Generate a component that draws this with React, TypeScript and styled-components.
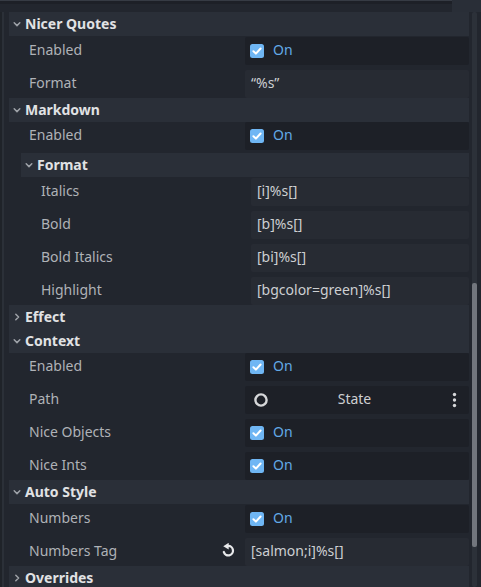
import React from "react";
import styled, { createGlobalStyle } from "styled-components";

const GlobalStyle = createGlobalStyle`
  html, body { margin: 0; padding: 0; background: #22262e; }
  body { font-family: "Noto Sans", "Open Sans", sans-serif; font-size: 14px; }
  * { box-sizing: border-box; }
`;

const Panel = styled.div`
  width: 481px;
  height: 587px;
  display: flex;
  overflow: hidden;
  background: #22262e;
`;

const Gutter = styled.div`
  flex: 0 0 9px;
  display: flex;
  flex-direction: column;
`;

const GutterTop = styled.div`
  flex: 0 0 12px;
  border-top: 1px solid #363b44;
  background: linear-gradient(to bottom, #1d2027 0 3px, #22262e 3px);
`;

const GutterRail = styled.div`
  flex: 1;
  background: linear-gradient(to right, #1f2329 0 2px, #2b3038 2px 4px, #22262e 4px);
`;

const MainColumn = styled.div`
  flex: 1;
  display: flex;
  flex-direction: column;
  min-width: 0;
`;

const TopStrip = styled.div`
  flex: 0 0 12px;
  display: flex;
`;

const StubLeft = styled.div`
  flex: 1;
  border-top: 1px solid #363b44;
  background: linear-gradient(to bottom, #1d2027 0 3px, #22262e 3px);
`;

const StubRight = styled.div`
  flex: 0 0 29px;
  background: #292e37;
`;

const Body = styled.div`
  flex: 1;
  display: flex;
  min-height: 0;
`;

const Content = styled.div`
  flex: 0 0 460px;
  display: flex;
  flex-direction: column;
  overflow: hidden;
`;

const ScrollArea = styled.div`
  flex: 1;
  padding: 0 4px 0 3px;
  display: flex;
`;

const Track = styled.div`
  width: 5px;
  height: 100%;
  background: #2c3139;
  border-radius: 2px;
  display: flex;
  flex-direction: column;
`;

const Thumb = styled.div<{ $offset: number; $size: number }>`
  margin-top: ${(p) => p.$offset}px;
  height: ${(p) => p.$size}px;
  background: #72767d;
  border-radius: 2px;
`;

const Header = styled.div<{ $nested?: boolean }>`
  flex: 0 0 24px;
  height: 24px;
  display: flex;
  align-items: center;
  gap: 4px;
  margin-left: ${(p) => (p.$nested ? 12 : 0)}px;
  padding-left: 4px;
  background: #2a2f38;
  color: #e1e2e4;
  font-weight: 700;
  font-size: 14px;
  line-height: 1;
`;

const SectionBody = styled.div`
  display: flex;
  flex-direction: column;
  gap: 5px;
  padding-top: 0.5px;
`;

const SubSection = styled.div`
  display: flex;
  flex-direction: column;
  margin-top: -2px;
`;

const Row = styled.div`
  display: flex;
  height: 28px;
  line-height: 1;
`;

const Label = styled.div<{ $nested?: boolean }>`
  flex: 0 0 ${(p) => (p.$nested ? 242 : 236)}px;
  padding-left: ${(p) => (p.$nested ? 32 : 20)}px;
  padding-right: 9px;
  padding-bottom: 2px;
  display: flex;
  align-items: center;
  justify-content: space-between;
  color: #afb2b7;
  font-size: 14px;
  white-space: nowrap;
`;

const Field = styled.div<{ $variant: "check" | "text" | "path" }>`
  flex: 1;
  display: flex;
  align-items: center;
  border-radius: 2px;
  background: ${(p) => (p.$variant === "text" ? "#272b33" : "#1d2027")};
  padding-left: ${(p) => (p.$variant === "check" ? 5 : p.$variant === "path" ? 8 : 6)}px;
  gap: ${(p) => (p.$variant === "check" ? 9 : 0)}px;
  color: #cdcfd2;
  font-size: 14px;
  white-space: nowrap;
  overflow: hidden;
`;

const FieldText = styled.span`
  padding-bottom: 2px;
`;

const OnText = styled.span`
  color: #62a9e6;
  padding-bottom: 2px;
`;

const PathName = styled.span`
  flex: 1;
  text-align: center;
  color: #cdcfd2;
  padding-bottom: 2px;
`;

const Kebab = styled.div`
  flex: 0 0 29px;
  display: flex;
  justify-content: center;
  align-items: center;
`;

const Chevron = ({ open }: { open: boolean }) => (
  <svg width="8" height="8" viewBox="0 0 8 8">
    {open ? (
      <path d="M1.2 2.8 L4 5.6 L6.8 2.8" fill="none" stroke="#9ea2a8" strokeWidth="1.5" strokeLinecap="round" strokeLinejoin="round" />
    ) : (
      <path d="M2.8 1.2 L5.6 4 L2.8 6.8" fill="none" stroke="#9ea2a8" strokeWidth="1.5" strokeLinecap="round" strokeLinejoin="round" />
    )}
  </svg>
);

const CheckIcon = () => (
  <svg width="14" height="14" viewBox="0 0 14 14">
    <rect x="0" y="0" width="14" height="14" rx="2.5" fill="#6fb6f4" />
    <path d="M3.4 7.3 L5.9 9.6 L10.6 4.5" fill="none" stroke="#ffffff" strokeWidth="2" strokeLinecap="round" strokeLinejoin="round" />
  </svg>
);

const RingIcon = () => (
  <svg width="16" height="16" viewBox="0 0 16 16">
    <circle cx="8" cy="8" r="5.6" fill="none" stroke="#d6d7d9" strokeWidth="2.4" />
  </svg>
);

const KebabIcon = () => (
  <svg width="5" height="16" viewBox="0 0 5 16">
    <circle cx="2.5" cy="2.5" r="1.7" fill="#d6d7d9" />
    <circle cx="2.5" cy="8" r="1.7" fill="#d6d7d9" />
    <circle cx="2.5" cy="13.5" r="1.7" fill="#d6d7d9" />
  </svg>
);

const RevertIcon = () => (
  <svg width="15" height="15" viewBox="0 0 16 16">
    <path d="M7.6 3.2 A5 5 0 1 1 3 9.6" fill="none" stroke="#e8e9eb" strokeWidth="2.4" strokeLinecap="round" />
    <path d="M2.4 3.4 L8.2 -0.2 L8.2 7 Z" fill="#e8e9eb" />
  </svg>
);

type FieldProps = { label: string; nested?: boolean; revert?: boolean };

const CheckRow = ({ label, nested }: FieldProps) => (
  <Row>
    <Label $nested={nested}>{label}</Label>
    <Field $variant="check">
      <CheckIcon />
      <OnText>On</OnText>
    </Field>
  </Row>
);

const TextRow = ({ label, nested, revert, value }: FieldProps & { value: string }) => (
  <Row>
    <Label $nested={nested}>
      <span>{label}</span>
      {revert && <RevertIcon />}
    </Label>
    <Field $variant="text">
      <FieldText>{value}</FieldText>
    </Field>
  </Row>
);

const PathRow = ({ label }: FieldProps) => (
  <Row>
    <Label>{label}</Label>
    <Field $variant="path">
      <RingIcon />
      <PathName>State</PathName>
      <Kebab>
        <KebabIcon />
      </Kebab>
    </Field>
  </Row>
);

const SectionHeader = ({ title, open, nested }: { title: string; open: boolean; nested?: boolean }) => (
  <Header $nested={nested}>
    <Chevron open={open} />
    <span>{title}</span>
  </Header>
);

export default function App() {
  return (
    <>
      <GlobalStyle />
      <Panel>
        <Gutter>
          <GutterTop />
          <GutterRail />
        </Gutter>
        <MainColumn>
          <TopStrip>
            <StubLeft />
            <StubRight />
          </TopStrip>
          <Body>
            <Content>
              <SectionHeader title="Nicer Quotes" open />
              <SectionBody>
                <CheckRow label="Enabled" />
                <TextRow label="Format" value={"\u201C%s\u201D"} />
              </SectionBody>

              <SectionHeader title="Markdown" open />
              <SectionBody>
                <CheckRow label="Enabled" />
                <SubSection>
                  <SectionHeader title="Format" open nested />
                  <SectionBody>
                    <TextRow label="Italics" nested value="[i]%s[]" />
                    <TextRow label="Bold" nested value="[b]%s[]" />
                    <TextRow label="Bold Italics" nested value="[bi]%s[]" />
                    <TextRow label="Highlight" nested value="[bgcolor=green]%s[]" />
                  </SectionBody>
                </SubSection>
              </SectionBody>

              <SectionHeader title="Effect" open={false} />

              <SectionHeader title="Context" open />
              <SectionBody>
                <CheckRow label="Enabled" />
                <PathRow label="Path" />
                <CheckRow label="Nice Objects" />
                <CheckRow label="Nice Ints" />
              </SectionBody>

              <SectionHeader title="Auto Style" open />
              <SectionBody>
                <CheckRow label="Numbers" />
                <TextRow label="Numbers Tag" revert value="[salmon;i]%s[]" />
              </SectionBody>

              <SectionHeader title="Overrides" open={false} />
            </Content>
            <ScrollArea>
              <Track>
                <Thumb $offset={271} $size={264} />
              </Track>
            </ScrollArea>
          </Body>
        </MainColumn>
      </Panel>
    </>
  );
}
